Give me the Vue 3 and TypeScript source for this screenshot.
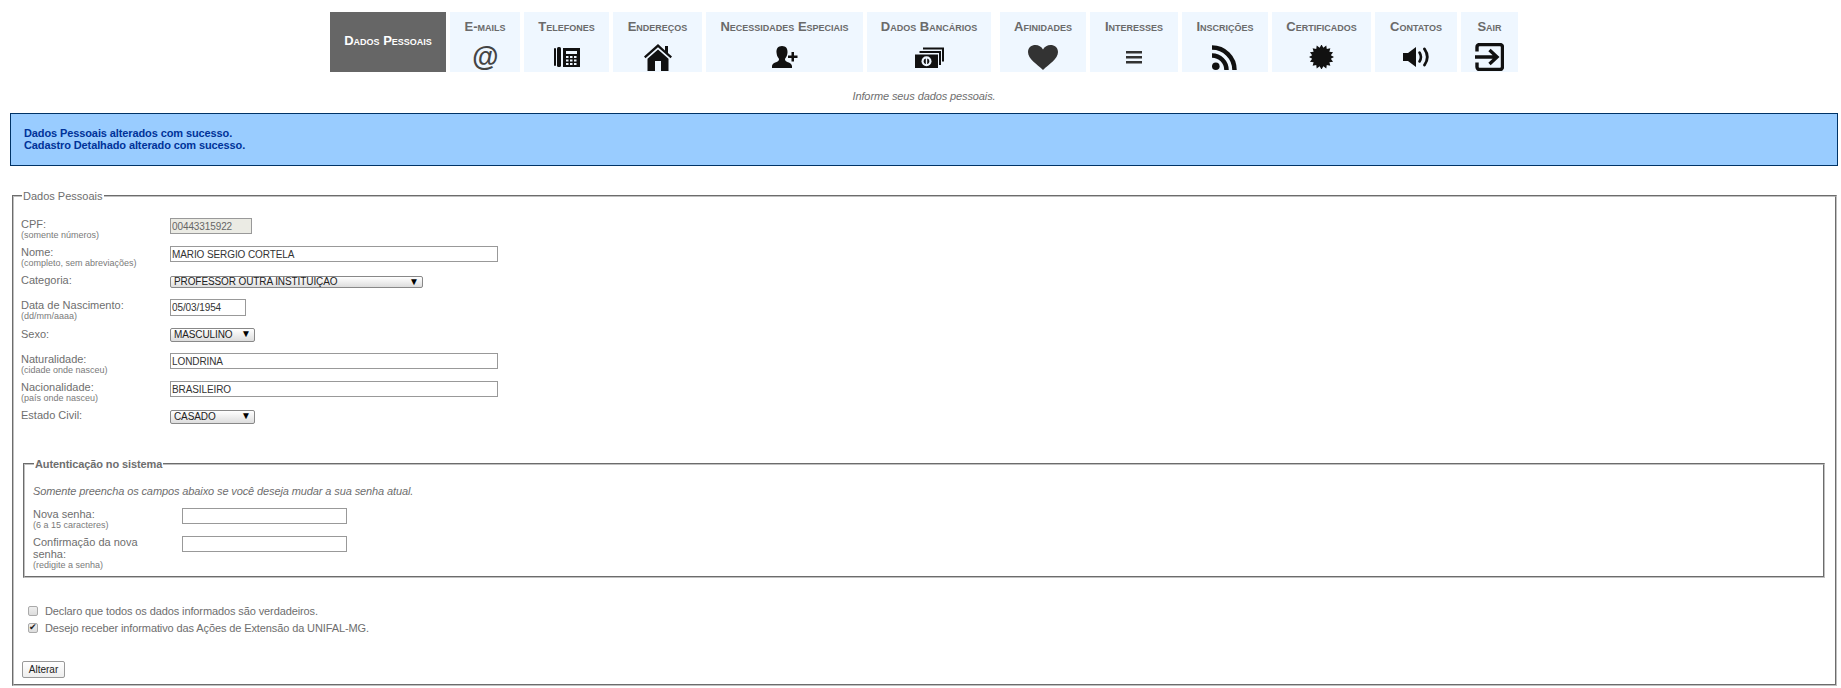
<script setup lang="ts">
interface Tab { label: string; icon: string; width: number; active?: boolean; spaced?: boolean }
const tabs: Tab[] = [
  { label: 'Dados Pessoais', icon: '', width: 116, active: true },
  { label: 'E-mails', icon: 'at', width: 70 },
  { label: 'Telefones', icon: 'phone', width: 85 },
  { label: 'Endereços', icon: 'home', width: 89 },
  { label: 'Necessidades Especiais', icon: 'user', width: 157 },
  { label: 'Dados Bancários', icon: 'money', width: 124 },
  { label: 'Afinidades', icon: 'heart', width: 86, spaced: true },
  { label: 'Interesses', icon: 'bars', width: 88 },
  { label: 'Inscrições', icon: 'rss', width: 86 },
  { label: 'Certificados', icon: 'burst', width: 99 },
  { label: 'Contatos', icon: 'sound', width: 82 },
  { label: 'Sair', icon: 'exit', width: 57 }
]
const burst: string = Array.from({ length: 32 }, (_, i) => {
  const r = i % 2 === 0 ? 12.5 : 9.5
  const a = (i * Math.PI) / 16
  return `${(12.5 + r * Math.cos(a)).toFixed(2)},${(12 + r * Math.sin(a)).toFixed(2)}`
}).join(' ')
</script>

<template>
  <div class="page">
    <nav class="tabs">
      <a
        v-for="t in tabs"
        :key="t.label"
        class="tab"
        :class="{ active: t.active, spaced: t.spaced }"
        :style="{ width: t.width + 'px' }"
      >
        <span class="tab-label">{{ t.label }}</span>
        <span v-if="t.icon" class="tab-icon">
          <span v-if="t.icon === 'at'" class="at">@</span>
          <svg v-else-if="t.icon === 'phone'" width="26" height="20" viewBox="0 0 26 20">
            <rect x="0" y="1" width="2" height="18" rx="1" fill="#111" />
            <rect x="3" y="0" width="4" height="20" rx="1.500" fill="#111" />
            <path d="M9 1h17v19H9z" fill="#111" />
            <rect x="12" y="4" width="11" height="3" fill="#eef6fe" />
            <path d="M12 9h2.500v2H12zM16 9h2.500v2H16zM20 9h2.500v2H20zM12 12.500h2.500v2H12zM16 12.500h2.500v2H16zM20 12.500h2.500v2H20zM12 16h2.500v2H12zM16 16h2.500v2H16zM20 16h2.500v2H20z" fill="#eef6fe" />
          </svg>
          <svg v-else-if="t.icon === 'home'" width="28" height="27" viewBox="0 0 28 27">
            <path d="M14 0L0 12.500l1.500 1.800L14 3.200l12.500 11.100 1.500-1.800-4-3.500V2h-3v4.600z" fill="#111" />
            <path d="M14 5.500L3.500 14.800V27h7.500V17h6v10h7.500V14.800z" fill="#111" />
          </svg>
          <svg v-else-if="t.icon === 'user'" width="26" height="22" viewBox="0 0 26 22">
            <path d="M10 0c-4 0-5.800 2.800-5.500 6.500.2 2.500 1 4.500 2.300 6 .4 1 .2 2-.8 2.700C3.500 16.500.5 17 0 20v2h20v-2c-.5-3-3.500-3.500-6-4.800-1-.7-1.200-1.700-.8-2.700 1.300-1.500 2.100-3.500 2.300-6C15.800 2.800 14 0 10 0z" fill="#111" />
            <path d="M19.500 6h2.500v3.500h3.500V12H22v3.500h-2.500V12H16V9.500h3.500z" fill="#111" />
          </svg>
          <svg v-else-if="t.icon === 'money'" width="29" height="21" viewBox="0 0 29 21">
            <path d="M8 .5h21v14h-2V2.500H8z" fill="#111" />
            <path d="M4.500 4h21.500v14h-2V6H4.500z" fill="#111" />
            <rect x="0" y="7.500" width="23" height="13.500" fill="#111" />
            <circle cx="11.500" cy="14.200" r="5" fill="#eef6fe" />
            <circle cx="11.500" cy="14.200" r="2.800" fill="#111" />
            <rect x="10.800" y="10.500" width="1.400" height="7.500" fill="#eef6fe" />
          </svg>
          <svg v-else-if="t.icon === 'heart'" width="30" height="25" viewBox="0 0 30 25">
            <path d="M15 25C9 19 0 14 0 7 0 2.500 3.500 0 7.500 0 10.500 0 13.500 1.500 15 4.500 16.500 1.500 19.500 0 22.500 0 26.500 0 30 2.500 30 7 30 14 21 19 15 25z" fill="#333" />
          </svg>
          <svg v-else-if="t.icon === 'bars'" width="16" height="13" viewBox="0 0 16 13">
            <path d="M0 0h16v2.600H0zM0 5h16v2.600H0zM0 10h16v2.600H0z" fill="#333" />
          </svg>
          <svg v-else-if="t.icon === 'rss'" width="26" height="25" viewBox="0 0 26 25">
            <circle cx="3.800" cy="21.200" r="3.800" fill="#111" />
            <path d="M0 10.500a14.500 14.500 0 0 1 14.500 14.500" fill="none" stroke="#111" stroke-width="4.500" />
            <path d="M0 2.500a22.500 22.500 0 0 1 22.500 22.500" fill="none" stroke="#111" stroke-width="4.500" />
          </svg>
          <svg v-else-if="t.icon === 'burst'" width="25" height="24" viewBox="0 0 25 24">
            <polygon :points="burst" fill="#111" />
          </svg>
          <svg v-else-if="t.icon === 'sound'" width="27" height="20" viewBox="0 0 27 20">
            <path d="M0 6h5l8-6v20l-8-6H0z" fill="#111" />
            <path d="M16.500 5.500c1.800 2.800 1.800 6.200 0 9" fill="none" stroke="#111" stroke-width="2.600" stroke-linecap="round" />
            <path d="M21.500 2c3.500 5 3.500 11 0 16" fill="none" stroke="#111" stroke-width="2.800" stroke-linecap="round" />
          </svg>
          <svg v-else-if="t.icon === 'exit'" width="29" height="28" viewBox="0 0 29 28">
            <path d="M2 8.500V4a2.500 2.500 0 0 1 2.500-2.500h20.500a2.500 2.500 0 0 1 2.500 2.500v20a2.500 2.500 0 0 1-2.500 2.500H4.500A2.500 2.500 0 0 1 2 24v-4.500" fill="none" stroke="#111" stroke-width="3.400" />
            <path d="M0 14h21M14.500 7l7.500 7-7.500 7" fill="none" stroke="#111" stroke-width="3.400" />
          </svg>
        </span>
      </a>
    </nav>

    <p class="subtitle">Informe seus dados pessoais.</p>

    <div class="notice">
      Dados Pessoais alterados com sucesso.<br />
      Cadastro Detalhado alterado com sucesso.
    </div>

    <form @submit.prevent>
      <fieldset class="outer">
        <legend>Dados Pessoais</legend>

        <div class="row">
          <label>CPF:<small>(somente números)</small></label>
          <input class="cpf" type="text" value="00443315922" disabled />
        </div>
        <div class="row">
          <label>Nome:<small>(completo, sem abreviações)</small></label>
          <input class="long" type="text" value="MARIO SERGIO CORTELA" />
        </div>
        <div class="row h25">
          <label>Categoria:</label>
          <span class="select cat"><select><option>PROFESSOR OUTRA INSTITUIÇÃO</option></select></span>
        </div>
        <div class="row h29">
          <label>Data de Nascimento:<small>(dd/mm/aaaa)</small></label>
          <input class="date" type="text" value="05/03/1954" />
        </div>
        <div class="row h25">
          <label>Sexo:</label>
          <span class="select short"><select><option>MASCULINO</option></select></span>
        </div>
        <div class="row">
          <label>Naturalidade:<small>(cidade onde nasceu)</small></label>
          <input class="long" type="text" value="LONDRINA" />
        </div>
        <div class="row">
          <label>Nacionalidade:<small>(país onde nasceu)</small></label>
          <input class="long" type="text" value="BRASILEIRO" />
        </div>
        <div class="row h25">
          <label>Estado Civil:</label>
          <span class="select short civil"><select><option>CASADO</option></select></span>
        </div>

        <fieldset class="inner">
          <legend>Autenticação no sistema</legend>
          <p class="hint">Somente preencha os campos abaixo se você deseja mudar a sua senha atual.</p>
          <div class="row">
            <label>Nova senha:<small>(6 a 15 caracteres)</small></label>
            <input class="pass" type="password" />
          </div>
          <div class="row last">
            <label>Confirmação da nova senha:<small>(redigite a senha)</small></label>
            <input class="pass" type="password" />
          </div>
        </fieldset>

        <div class="checks">
          <label class="check"><input type="checkbox" />Declaro que todos os dados informados são verdadeiros.</label>
          <label class="check"><input type="checkbox" checked />Desejo receber informativo das Ações de Extensão da UNIFAL-MG.</label>
        </div>

        <button class="submit" type="submit">Alterar</button>
      </fieldset>
    </form>
  </div>
</template>

<style>
html, body { margin: 0; background: #fff; }
</style>

<style scoped>
.page {
  padding: 12px 3px 0 10px;
  font-family: "Liberation Sans", Arial, sans-serif;
  font-size: 11px;
  color: #6e6e6e;
}
.tabs {
  display: flex;
  justify-content: center;
  gap: 4px;
}
.tab {
  display: flex;
  flex: none;
  flex-direction: column;
  align-items: center;
  height: 60px;
  box-sizing: border-box;
  padding-top: 8px;
  background: #eff7ff;
  font-size: 13px;
  font-weight: bold;
  font-variant: small-caps;
  line-height: 13px;
  color: #6a6a6a;
  white-space: nowrap;
}
.tab.spaced { margin-left: 5px; }
.tab.active {
  justify-content: center;
  padding: 0 0 3px;
  background: #666;
  color: #fff;
}
.tab-icon {
  display: flex;
  align-items: center;
  justify-content: center;
  height: 30px;
  margin-top: 9px;
}
.at {
  font-size: 27px;
  line-height: 30px;
  font-weight: bold;
  font-style: italic;
  font-variant: normal;
  color: #444;
}
.subtitle {
  margin: 18px 0 10px;
  text-align: center;
  font-style: italic;
  line-height: 13px;
  letter-spacing: -0.11px;
}
.notice {
  box-sizing: border-box;
  height: 53px;
  padding: 13px 13px;
  border: 1px solid #003366;
  background: #99ccff;
  color: #003399;
  font-size: 11px;
  font-weight: bold;
  line-height: 12px;
  letter-spacing: -0.11px;
}
fieldset {
  margin: 0;
  min-width: 0;
  border: 2px groove #c0c0c0;
}
legend {
  padding: 2px 1px 0;
  line-height: 13px;
}
.outer {
  margin: 22px 1px 0 2px;
  padding: 15px 8px 6px 7px;
}
.outer > legend { margin-left: 1px; }
.row {
  display: flex;
  align-items: flex-start;
  height: 28px;
}
.h25 { height: 25px; }
.h29 { height: 29px; }
.row > label {
  box-sizing: border-box;
  flex: none;
  width: 149px;
  padding-right: 24px;
  line-height: 12px;
}
small {
  display: block;
  font-size: 9px;
  line-height: 10px;
  color: #7a7a7a;
}
input[type="text"], input[type="password"] {
  box-sizing: border-box;
  height: 16px;
  padding: 1px;
  border: 1px solid #999;
  background: #fff;
  color: #333;
  font: 10px "Liberation Sans", Arial, sans-serif;
  letter-spacing: -0.1px;
}
.cpf { width: 82px; background: #ebebe4 !important; color: #666 !important; }
.long { width: 328px; }
.date { width: 76px; height: 17px !important; }
.pass { width: 165px; }
.select {
  position: relative;
  display: block;
}
.select::after {
  content: "▼";
  position: absolute;
  top: 0;
  right: 4px;
  font-size: 10px;
  line-height: 11px;
  color: #000;
  pointer-events: none;
}
select {
  display: block;
  box-sizing: border-box;
  width: 100%;
  height: 12px;
  padding: 0 0 0 3px;
  border: 1px solid #888;
  border-radius: 2px;
  appearance: none;
  background: linear-gradient(#fff, #ddd);
  color: #222;
  font: 10px/10px "Liberation Sans", Arial, sans-serif;
  letter-spacing: -0.1px;
}
.cat { width: 253px; margin-top: 2px; }
.short { width: 85px; }
.short select { height: 14px; }
.civil { margin-top: 1px; }
.inner {
  margin: 22px 2px 0 2px;
  padding: 14px 8px 0;
}
.inner > legend {
  margin-left: 1px;
  font-weight: bold;
  letter-spacing: -0.1px;
}
.hint {
  margin: 0 0 10px;
  font-style: italic;
  line-height: 13px;
  letter-spacing: -0.11px;
}
.inner .row > label { padding-right: 26px; }
.inner .last { height: 40px; }
.checks {
  display: flex;
  flex-direction: column;
  gap: 5px;
  margin: 27px 0 27px 7px;
}
.check {
  display: flex;
  align-items: center;
  gap: 7px;
  height: 12px;
  line-height: 12px;
  letter-spacing: -0.11px;
}
.check input {
  position: relative;
  box-sizing: border-box;
  width: 10px;
  height: 10px;
  margin: 0;
  appearance: none;
  border: 1px solid #aaa;
  border-radius: 2px;
  background: linear-gradient(#eee, #ddd);
}
.check input:checked::after {
  content: "✔";
  position: absolute;
  left: 0;
  top: -2px;
  font-size: 9px;
  line-height: 11px;
  color: #222;
}
.submit {
  display: block;
  box-sizing: border-box;
  width: 43px;
  height: 17px;
  margin-left: 1px;
  padding: 0;
  border: 1px solid #999;
  border-radius: 2px;
  background: linear-gradient(#fff, #eee);
  color: #222;
  font: 10px "Liberation Sans", Arial, sans-serif;
}
</style>
